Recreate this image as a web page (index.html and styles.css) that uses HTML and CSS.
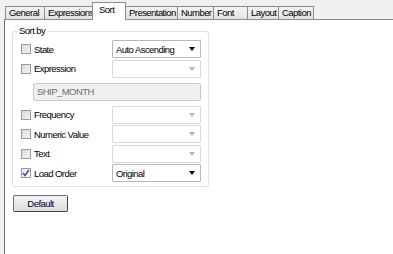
FILE: index.html
```html
<!DOCTYPE html>
<html lang="en">
<head>
    <meta charset="UTF-8">
    <title>Sort</title>
    <link rel="stylesheet" href="styles.css">
</head>
<body>
    <div class="tabs">
        <div class="tab t-general">General</div>
        <div class="tab t-expr">Expressions</div>
        <div class="tab active t-sort">Sort</div>
        <div class="tab t-pres">Presentation</div>
        <div class="tab t-num">Number</div>
        <div class="tab t-font">Font</div>
        <div class="tab t-layout">Layout</div>
        <div class="tab t-caption">Caption</div>
    </div>

    <div class="panel">
        <div class="group">
            <span class="legend">Sort by</span>

            <div class="row">
                <label class="check"><span class="box"></span>State</label>
                <div class="combo"><span>Auto Ascending</span><i class="arrow"></i></div>
            </div>
            <div class="row">
                <label class="check"><span class="box"></span>Expression</label>
                <div class="combo off"><span></span><i class="arrow"></i></div>
            </div>
            <div class="expr">SHIP_MONTH</div>
            <div class="row">
                <label class="check"><span class="box"></span>Frequency</label>
                <div class="combo off"><span></span><i class="arrow"></i></div>
            </div>
            <div class="row">
                <label class="check"><span class="box"></span>Numeric Value</label>
                <div class="combo off"><span></span><i class="arrow"></i></div>
            </div>
            <div class="row">
                <label class="check"><span class="box"></span>Text</label>
                <div class="combo off"><span></span><i class="arrow"></i></div>
            </div>
            <div class="row">
                <label class="check"><span class="box checked"><svg width="8" height="8" viewBox="0 0 8 8"><path d="M1 4 L3 6.5 L7 1" fill="none" stroke="#3b4f9a" stroke-width="1.6"/></svg></span>Load Order</label>
                <div class="combo"><span>Original</span><i class="arrow"></i></div>
            </div>
        </div>

        <button class="btn-default">Default</button>
    </div>
</body>
</html>
```

FILE: styles.css
```css
body {
    margin: 0;
    background-color: #f0f0f0;
    font-family: "Liberation Sans", Arial, sans-serif;
    font-size: 9.5px;
    letter-spacing: -0.55px;
    color: #000;
    height: 254px;
    overflow: hidden;
}
.tabs {
    display: flex;
    align-items: flex-end;
    height: 19px;
    padding-left: 5px;
}
.tab {
    box-sizing: border-box;
    height: 13px;
    line-height: 12px;
    padding-left: 3px;
    border: 1px solid #898c95;
    border-bottom: none;
    margin-left: -1px;
    background: linear-gradient(#f3f3f3, #e3e3e3);
    white-space: nowrap;
    overflow: hidden;
}
.tab:first-child {
    margin-left: 0;
}
.tab.active {
    height: 18px;
    line-height: 13px;
    padding-left: 6px;
    background-color: #fff;
    background-image: none;
    margin-bottom: -1px;
    position: relative;
    z-index: 1;
}
.t-general { width: 40px; }
.t-expr { width: 49px; }
.t-sort { width: 34px; }
.t-pres { width: 53px; }
.t-num { width: 37px; }
.t-font { width: 35px; }
.t-layout { width: 32px; }
.t-caption { width: 36px; }

.panel {
    background-color: #fff;
    border-top: 1px solid #898c95;
    border-left: 1px solid #6f7082;
    margin-left: 4px;
    height: 235px;
    padding: 11px 0 0 7px;
}
.group {
    position: relative;
    width: 180px;
    height: 146px;
    border: 1px solid #dcdfe3;
    border-radius: 3px;
    padding: 8px 7px 0 8px;
    display: flex;
    flex-direction: column;
    gap: 1.5px;
}
.legend {
    position: absolute;
    top: -7px;
    left: 4px;
    padding: 0 2px;
    background-color: #fff;
}
.row {
    display: flex;
    justify-content: space-between;
    align-items: center;
    height: 18px;
}
.check {
    display: flex;
    align-items: center;
    gap: 3px;
}
.box {
    width: 8px;
    height: 8px;
    border: 1px solid #9a9a9a;
    background: linear-gradient(135deg, #d8d8d8, #f4f4f4);
    display: flex;
    align-items: center;
    justify-content: center;
}
.box.checked {
    background: linear-gradient(135deg, #e6e6e6, #fff);
}
.combo {
    width: 84px;
    height: 16px;
    border: 1px solid #b8b8b8;
    border-radius: 1px;
    display: flex;
    align-items: center;
    justify-content: space-between;
    padding-left: 3px;
}
.combo.off {
    border-color: #d9d9d9;
}
.arrow {
    width: 0;
    height: 0;
    border-left: 3.5px solid transparent;
    border-right: 3.5px solid transparent;
    border-top: 4px solid #000;
    margin-right: 5px;
}
.combo.off .arrow {
    border-top-color: #b3b3b3;
}
.expr {
    margin: 4px 0 3px 12px;
    height: 16px;
    line-height: 16px;
    border: 1px solid #c9c9c9;
    border-radius: 2px;
    background-color: #f0f0f0;
    color: #6d6d6d;
    padding-left: 3px;
}
.btn-default {
    display: block;
    margin-top: 8px;
    margin-left: 1px;
    width: 55px;
    height: 17px;
    padding: 0;
    font-family: inherit;
    font-size: 9.5px;
    letter-spacing: -0.55px;
    color: #000040;
    border: 1px solid #707070;
    border-right-color: #404040;
    border-bottom-color: #404040;
    border-radius: 2px;
    background: linear-gradient(#f4f4f4, #dcdcdc);
}
```
